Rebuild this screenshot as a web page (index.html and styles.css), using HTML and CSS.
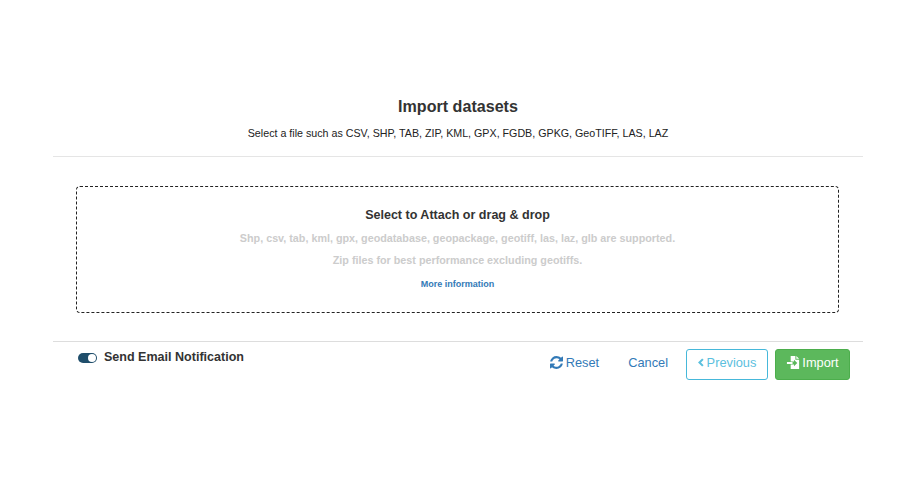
FILE: index.html
```html
<!DOCTYPE html>
<html lang="en">
<head>
<meta charset="utf-8">
<title>Import datasets</title>
<link rel="stylesheet" href="styles.css">
</head>
<body>
<main class="panel">
  <header class="head">
    <h1 class="title">Import datasets</h1>
    <p class="subtitle">Select a file such as CSV, SHP, TAB, ZIP, KML, GPX, FGDB, GPKG, GeoTIFF, LAS, LAZ</p>
  </header>
  <section class="body">
    <div class="drop">
      <h2 class="drop-title">Select to Attach or drag &amp; drop</h2>
      <p class="drop-note first">Shp, csv, tab, kml, gpx, geodatabase, geopackage, geotiff, las, laz, glb are supported.</p>
      <p class="drop-note second">Zip files for best performance excluding geotiffs.</p>
      <a class="more" href="#">More information</a>
    </div>
  </section>
  <footer class="foot">
    <div class="notify">
      <span class="toggle"><span class="knob"></span></span>
      <span class="notify-label">Send Email Notification</span>
    </div>
    <div class="actions">
      <a class="link reset" href="#">
        <svg class="ico-reset" viewBox="0 0 1536 1536" aria-hidden="true"><path fill="currentColor" d="M1511 928q0 5-1 7-64 268-268 434.500T764 1536q-146 0-282.500-55T238 1324l-129 129q-19 19-45 19t-45-19-19-45V960q0-26 19-45t45-19h448q26 0 45 19t19 45-19 45l-137 137q71 66 161 102t187 36q134 0 250-65t186-179q11-17 53-117 8-23 30-23h192q13 0 22.500 9.500t9.500 22.500zm25-800v448q0 26-19 45t-45 19h-448q-26 0-45-19t-19-45 19-45l138-138Q969 256 768 256q-134 0-250 65T332 500q-11 17-53 117-8 23-30 23H50q-13 0-22.500-9.500T18 608v-7q65-268 270-434.500T768 0q146 0 284 55.500T1297 212l130-129q19-19 45-19t45 19 19 45z"/></svg>Reset</a>
      <a class="link cancel" href="#">Cancel</a>
      <button class="btn prev" type="button">
        <svg class="ico-chev" viewBox="0 0 8 12" aria-hidden="true"><path fill="none" stroke="currentColor" stroke-width="2.800" d="M6.500 1.500 2 6l4.500 4.500"/></svg>Previous</button>
      <button class="btn import" type="button">
        <svg class="ico-import" viewBox="0 0 16 16" aria-hidden="true"><path fill="#fff" d="M5 1h5v4h4v10H5v-5h3.500v2L12 8.500 8.500 5v2H5zM11 1l3 3h-3zM1 7.500h6v2H1z"/></svg>Import</button>
    </div>
  </footer>
</main>
</body>
</html>
```

FILE: styles.css
```css
* { box-sizing: border-box; }
html, body { margin: 0; height: 100%; background: #fff; }
body { font-family: "Liberation Sans", Arial, sans-serif; color: #333; }
.panel { width: 810px; margin: 0 auto 0 53px; padding-top: 96px; }
.head { text-align: center; border-bottom: 1px solid #e5e5e5; height: 61px; }
.title { margin: 0; font-size: 16.100px; line-height: 20px; font-weight: 700; color: #333; }
.subtitle { margin: 10px 0 0; font-size: 10.700px; line-height: 14px; color: #222; }
.body { padding: 29px 24px 28px 23px; border-bottom: 1px solid #ddd; }
.drop { height: 127px; border: 1px dashed #222; border-radius: 4px; text-align: center; padding-top: 20px; }
.drop-title { margin: 0; font-size: 12.540px; line-height: 16px; font-weight: 700; color: #333; }
.drop-note { margin: 0; font-size: 10.770px; line-height: 14px; font-weight: 700; color: #ccc; }
.first { margin-top: 8px; }
.second { margin-top: 8px; }
.more { display: block; margin-top: 11px; font-size: 9px; line-height: 12px; font-weight: 700; color: #337ab7; text-decoration: none; }
.foot { display: flex; justify-content: space-between; align-items: flex-start; padding: 7px 13px 0 25px; }
.notify { display: flex; align-items: center; gap: 7px; height: 16px; }
.toggle { width: 19px; height: 10px; border-radius: 5px; background: #1f4e6b; position: relative; margin-top: 2px; }
.knob { position: absolute; right: 1px; top: 1px; width: 8px; height: 8px; border-radius: 50%; background: #fff; }
.notify-label { font-size: 12.540px; font-weight: 700; color: #333; }
.actions { display: flex; align-items: center; }
.link { display: inline-flex; align-items: center; font-size: 12.800px; color: #337ab7; text-decoration: none; margin-top: -5px; }
.reset { gap: 3px; margin-right: 29px; }
.cancel { margin-right: 18px; }
.ico-reset { width: 13px; height: 13px; }
.btn { height: 31px; border-radius: 3px; font: 12.800px/15px "Liberation Sans", Arial, sans-serif; display: inline-flex; align-items: center; justify-content: center; padding: 0 0 5px; }
.prev { width: 82px; background: #fff; border: 1px solid #46b8da; color: #5bc0de; gap: 3px; margin-right: 7px; }
.ico-chev { width: 6px; height: 9px; }
.import { width: 75px; background: #5cb85c; border: 1px solid #4cae4c; color: #fff; gap: 1px; }
.ico-import { width: 15px; height: 15px; }
```
